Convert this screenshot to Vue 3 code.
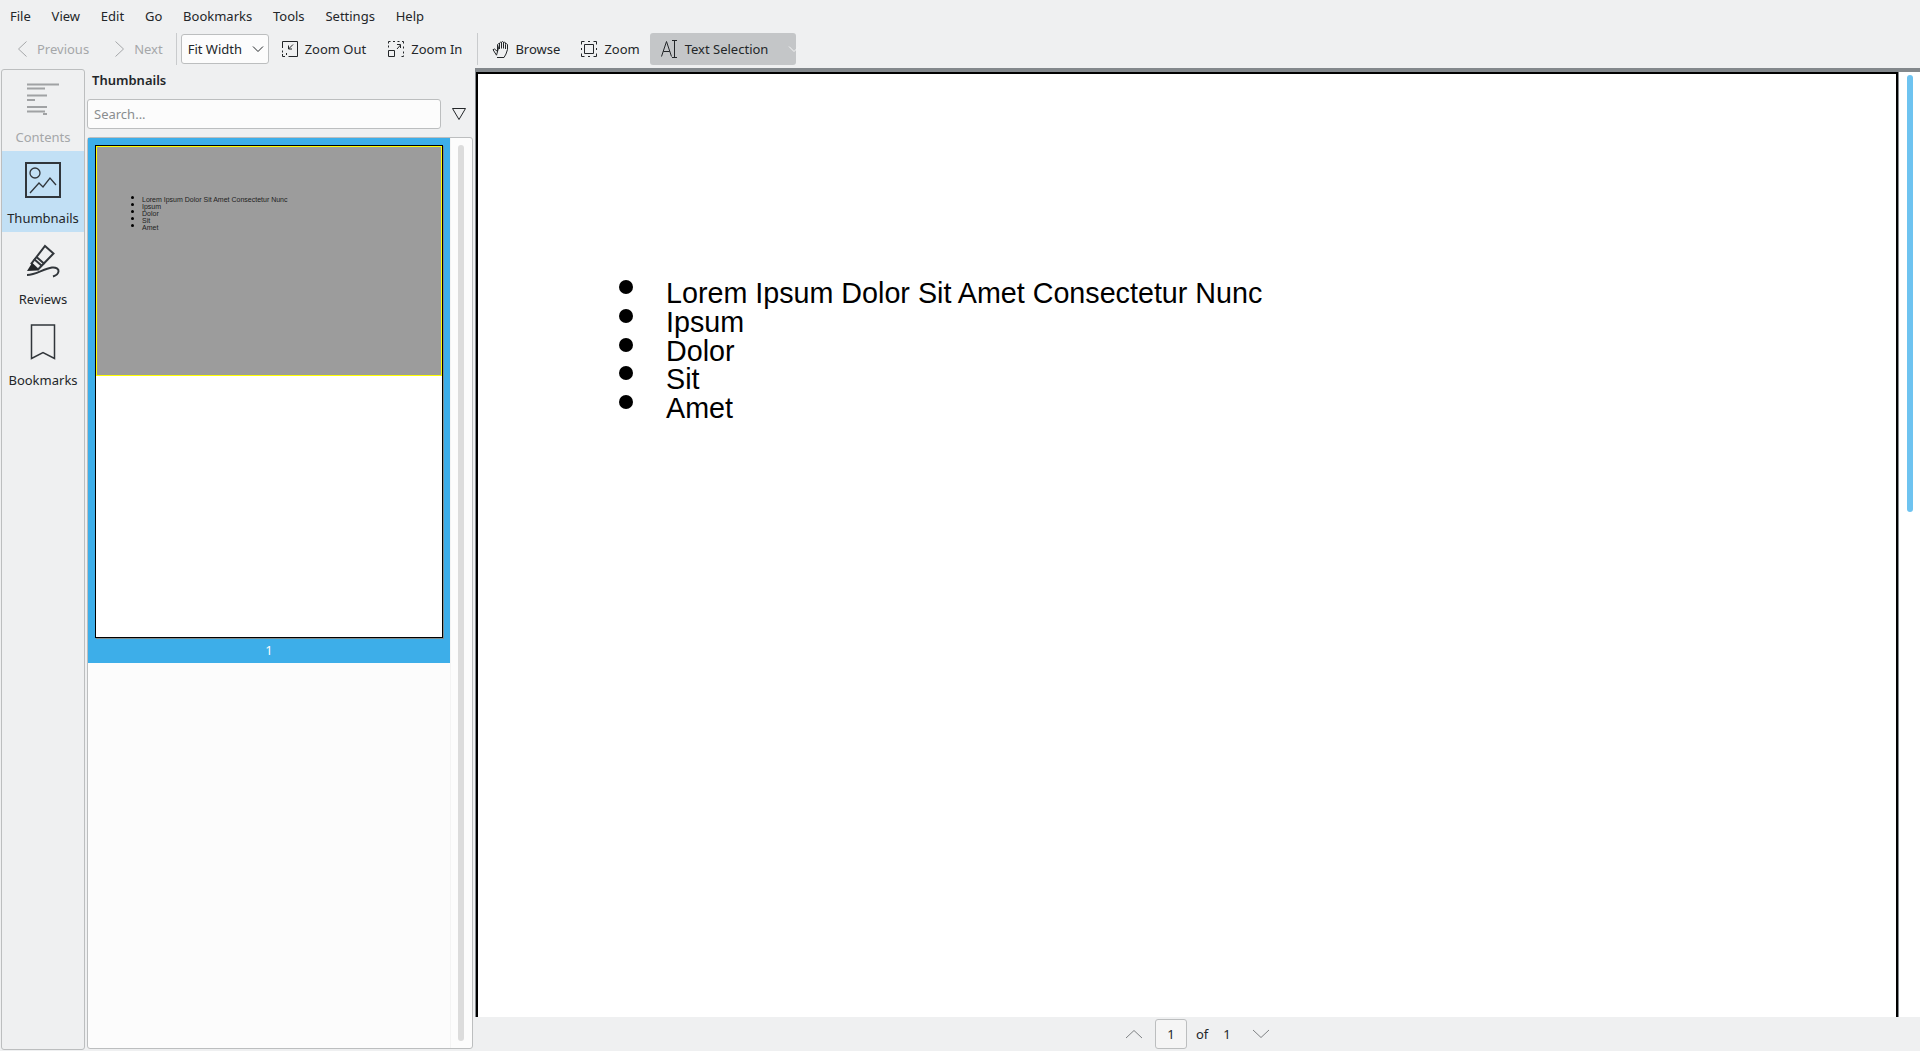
<script setup>
const menus = ['File', 'View', 'Edit', 'Go', 'Bookmarks', 'Tools', 'Settings', 'Help']
const lines = ['Lorem Ipsum Dolor Sit Amet Consectetur Nunc', 'Ipsum', 'Dolor', 'Sit', 'Amet']
</script>

<template>
  <div class="window">
    <div class="menubar">
      <span v-for="m in menus" :key="m" class="menu">{{ m }}</span>
    </div>

    <div class="toolbar">
      <div class="tool off prev">
        <svg width="12" height="20" viewBox="0 0 12 20"><path d="M10.500 2.500 2.500 10l8 7.500" /></svg>
        <span>Previous</span>
      </div>
      <div class="tool off next">
        <svg width="12" height="20" viewBox="0 0 12 20"><path d="M1.500 2.500 9.500 10l-8 7.500" /></svg>
        <span>Next</span>
      </div>
      <div class="sep"></div>
      <div class="combo">
        <span>Fit Width</span>
        <svg width="12" height="8" viewBox="0 0 12 8"><path d="M1 1.500 6 6.500l5-5" /></svg>
      </div>
      <div class="tool zoom-out">
        <svg width="16" height="16" viewBox="0 0 16 16">
          <path d="M.5 7V.5h15v15H6.500M.5 9.500v2M.5 13v2.500H3M4.500 12v2M11 3.500 6.500 8M6.500 4.500V8H10" />
        </svg>
        <span>Zoom Out</span>
      </div>
      <div class="tool zoom-in">
        <svg width="16" height="16" viewBox="0 0 16 16">
          <path d="M.5 9.500h6v6h-6zM.5 6.500v-2M.5 2.500v-2h2M5 .5h2M9.500.5h2M14 .5h1.500v2M15.500 5.500v2M15.500 10.500v2M15.500 14.500v1h-2M9 8l3.500-4M9 3.500h3.500V7" />
        </svg>
        <span>Zoom In</span>
      </div>
      <div class="sep second"></div>
      <div class="tool browse">
        <svg width="17" height="17" viewBox="0 0 17 17">
          <path d="M5 16.500h7l2-3.500 1.500-4.500v-5l-1-.8-1 .8V8M13.500 3V2l-1-1-1 .5V7.500M11.500 2V1.200l-1-.7-1 .7v6.300M9.500 2l-1-.8-1 .8v6M7.500 3.500l-1-.8-1 .8v7l-3-2.500-1.500.7 3.500 5.500z" />
        </svg>
        <span>Browse</span>
      </div>
      <div class="tool zoom-mode">
        <svg width="16" height="16" viewBox="0 0 16 16">
          <path d="M3.500 3.500h9v9h-9zM.5 3.500v-3h3M12.500.5h3v3M15.500 12.500v3h-3M3.500 15.500h-3v-3M7 .5h2M7 15.500h2M.5 7v2M15.500 7v2" />
        </svg>
        <span>Zoom</span>
      </div>
      <div class="tool active">
        <svg width="17" height="18" viewBox="0 0 17 18">
          <path d="M.5 16.500 5.500 1.500l5 15M2.300 11.500h6.400M11 .5h5M11 17.500h5M13.500.5v17" />
        </svg>
        <span>Text Selection</span>
        <svg class="drop" width="12" height="8" viewBox="0 0 12 8"><path d="M1 1.500 6 6.500l5-5" /></svg>
      </div>
    </div>

    <div class="main">
      <div class="sidebar">
        <div class="side-item off">
          <svg width="36" height="36" viewBox="0 0 36 36">
            <path d="M2 3.500h32M2 7.500h18M2 14.500h20M2 19h8M2 26h20M2 30.500h18M18 33h4" />
          </svg>
          <span>Contents</span>
        </div>
        <div class="side-item current">
          <svg width="36" height="36" viewBox="0 0 36 36">
            <path d="M1 1h34v34H1z" />
            <circle class="thin" cx="10" cy="11" r="5" />
            <path class="thin" d="M5 31l9-10 4 4 7-9 6 7" />
          </svg>
          <span>Thumbnails</span>
        </div>
        <div class="side-item">
          <svg width="36" height="36" viewBox="0 0 36 36">
            <path d="M20 3l8.500 7.500L13 26.500l-6.500-6z" />
            <path d="M9 16l8 7M11.500 14l8 7" />
            <path class="solid" d="M7 20l-5 8 10-.5 1-1z" />
            <path d="M2 32c9 0 16-6 25-7.500 4-.5 7 1.500 6.500 4-.3 2.500-2.500 4-5.500 5" />
          </svg>
          <span>Reviews</span>
        </div>
        <div class="side-item">
          <svg width="36" height="36" viewBox="0 0 36 36">
            <path class="mid" d="M6.500 1h23v33.500L18 28.500 6.500 34.500z" />
          </svg>
          <span>Bookmarks</span>
        </div>
      </div>

      <div class="panel">
        <div class="panel-title">Thumbnails</div>
        <div class="search-row">
          <div class="search">Search...</div>
          <svg class="filter" width="14" height="14" viewBox="0 0 14 14"><path d="M.5 1.500h13L7 12.500z" /></svg>
        </div>
        <div class="list">
          <div class="thumbs">
            <div class="selected">
              <div class="thumb">
                <div class="thumb-highlight">
                  <ul class="mini-text">
                    <li v-for="l in lines" :key="l"><i></i>{{ l }}</li>
                  </ul>
                </div>
              </div>
              <div class="page-no">1</div>
            </div>
          </div>
          <div class="list-scroll"><div class="list-handle"></div></div>
        </div>
      </div>

      <div class="viewer">
        <div class="doc">
          <div class="page">
            <ul class="page-text">
              <li v-for="l in lines" :key="l"><i></i>{{ l }}</li>
            </ul>
          </div>
          <div class="doc-scroll"><div class="doc-handle"></div></div>
        </div>
        <div class="pager">
          <svg width="18" height="10" viewBox="0 0 18 10"><path d="M1 9 9 1.500 17 9" /></svg>
          <div class="page-box">1</div>
          <span>of</span>
          <span class="total">1</span>
          <svg class="down" width="18" height="10" viewBox="0 0 18 10"><path d="M1 1l8 7.500L17 1" /></svg>
        </div>
      </div>
    </div>
  </div>
</template>

<style>
html, body {
  margin: 0;
  overflow: hidden;
}
</style>

<style scoped>
.window {
  width: 1920px;
  height: 1051px;
  display: flex;
  flex-direction: column;
  background: #eff0f1;
  color: #232629;
  font-family: "Noto Sans", sans-serif;
  font-size: 13px;
  overflow: hidden;
}

svg {
  display: block;
  flex: none;
  fill: none;
  stroke: #232629;
  stroke-width: 1;
}

.menubar {
  height: 32px;
  display: flex;
  align-items: center;
  padding-left: 10px;
  gap: 20.800px;
}

.toolbar {
  height: 36px;
  box-sizing: border-box;
  padding-bottom: 2px;
  display: flex;
  align-items: center;
  white-space: nowrap;
}

.tool {
  display: flex;
  align-items: center;
  gap: 7px;
}

.tool.off {
  color: #a5a7a9;
}

.tool.off svg {
  stroke: #a5a7a9;
}

.prev {
  margin-left: 16px;
  gap: 9px;
}

.next {
  margin-left: 25px;
  gap: 8px;
}

.sep {
  width: 1px;
  height: 32px;
  background: #c9cbcd;
  margin-left: 13px;
}

.sep.second {
  margin-left: 15px;
}

.combo {
  width: 88px;
  height: 30px;
  box-sizing: border-box;
  margin-left: 4px;
  padding: 0 4px 0 6px;
  display: flex;
  align-items: center;
  justify-content: space-between;
  background: #fcfcfc;
  border: 1px solid #bcbebf;
  border-radius: 3px;
}

.zoom-out {
  margin-left: 13px;
}

.zoom-in {
  margin-left: 22px;
}

.browse {
  margin-left: 14px;
  gap: 6px;
}

.zoom-mode {
  margin-left: 21px;
}

.active {
  margin-left: 10px;
  height: 32px;
  width: 146px;
  box-sizing: border-box;
  padding-left: 11px;
  background: #c4c6c8;
  border-radius: 3px;
}

.drop {
  margin-left: 13px;
  stroke: #f4f5f5;
}

.main {
  flex: 1;
  min-height: 0;
  display: flex;
}

.sidebar {
  width: 84px;
  height: 981px;
  box-sizing: border-box;
  margin: 1px 0 0 1px;
  border: 1px solid #bcbebf;
  border-radius: 3px;
}

.side-item {
  height: 81px;
  display: flex;
  flex-direction: column;
  align-items: center;
  padding-top: 11px;
  box-sizing: border-box;
  gap: 11px;
}

.side-item svg {
  stroke-width: 2;
  stroke: #31363b;
}

.side-item .thin {
  stroke-width: 1.300;
}

.side-item .mid {
  stroke-width: 1.500;
}

.side-item .solid {
  fill: #232629;
  stroke: none;
}

.side-item.off {
  color: #a5a7a9;
}

.side-item.off svg {
  stroke: #a0a2a4;
}

.side-item.current {
  background: #c2e0f5;
}

.panel {
  width: 388px;
  margin-left: 2px;
  display: flex;
  flex-direction: column;
}

.panel-title {
  height: 31px;
  line-height: 24px;
  padding-left: 5px;
  font-weight: 600;
}

.search-row {
  display: flex;
  align-items: center;
  height: 30px;
}

.search {
  width: 354px;
  height: 30px;
  box-sizing: border-box;
  padding-left: 6px;
  line-height: 28px;
  color: #8a8d8f;
  background: #fcfcfc;
  border: 1px solid #bcbebf;
  border-radius: 3px;
}

.filter {
  margin-left: 11px;
}

.list {
  flex: 1;
  min-height: 0;
  margin: 8px 2px 2px 0;
  display: flex;
  background: #fcfcfc;
  border: 1px solid #bcbebf;
  border-radius: 3px;
}

.thumbs {
  width: 362px;
}

.selected {
  background: #3daee9;
  padding: 7px 7px 0 7px;
  height: 525px;
  box-sizing: border-box;
}

.thumb {
  height: 493px;
  box-sizing: border-box;
  background: #fff;
  border: 1px solid #000;
  box-shadow: 1px 1px 0 #7f8c8d;
}

.thumb-highlight {
  height: 230px;
  box-sizing: border-box;
  background: #9c9c9c;
  border: 1px solid #ff0;
}

.mini-text {
  list-style: none;
  margin: 0;
  padding: 49px 0 0 45px;
  font-family: "Liberation Sans", sans-serif;
  font-size: 7px;
  line-height: 7px;
  color: #222;
}

.mini-text li {
  position: relative;
}

.mini-text i {
  position: absolute;
  left: -11px;
  top: 0;
  width: 3px;
  height: 3px;
  background: #000;
  border-radius: 50%;
}

.page-no {
  height: 25px;
  line-height: 25px;
  text-align: center;
  color: #fcfcfc;
}

.list-scroll {
  flex: 1;
  padding: 7px 0 7px 7px;
  border-left: 1px solid #f3f3f3;
}

.list-handle {
  width: 6px;
  height: 100%;
  background: #dcdcdc;
  border-radius: 3px;
}

.viewer {
  flex: 1;
  min-width: 0;
  display: flex;
  flex-direction: column;
}

.doc {
  flex: 1;
  min-height: 0;
  display: flex;
  background: #fff;
  border-top: 4px solid #83888c;
  border-left: 1px solid #83888c;
}

.page {
  flex: 1;
  background: #fff;
  border: 2px solid #000;
  border-bottom: 0;
  padding-top: 205px;
}

.page-text {
  list-style: none;
  margin: 0;
  padding: 0 0 0 188px;
  font-family: "Liberation Sans", sans-serif;
  font-size: 28.700px;
  line-height: 28.800px;
  color: #000;
}

.page-text li {
  position: relative;
}

.page-text i {
  position: absolute;
  left: -47px;
  top: 1px;
  width: 14px;
  height: 14px;
  background: #000;
  border-radius: 50%;
}

.doc-scroll {
  width: 22px;
  box-sizing: border-box;
  padding: 3px 0 0 8px;
  border-left: 1px solid #83888c;
}

.doc-handle {
  width: 6px;
  height: 437px;
  background: #6ec3f0;
  border-radius: 3px;
}

.pager {
  height: 34px;
  display: flex;
  align-items: center;
  padding-left: 650px;
}

.pager svg {
  stroke: #7f8284;
}

.page-box {
  width: 32px;
  height: 30px;
  box-sizing: border-box;
  margin: 0 9px 0 12px;
  line-height: 28px;
  text-align: center;
  background: #f5f5f5;
  border: 1px solid #bcbebf;
  border-radius: 3px;
}

.total {
  margin-left: 15px;
}

.down {
  margin-left: 21px;
}
</style>
